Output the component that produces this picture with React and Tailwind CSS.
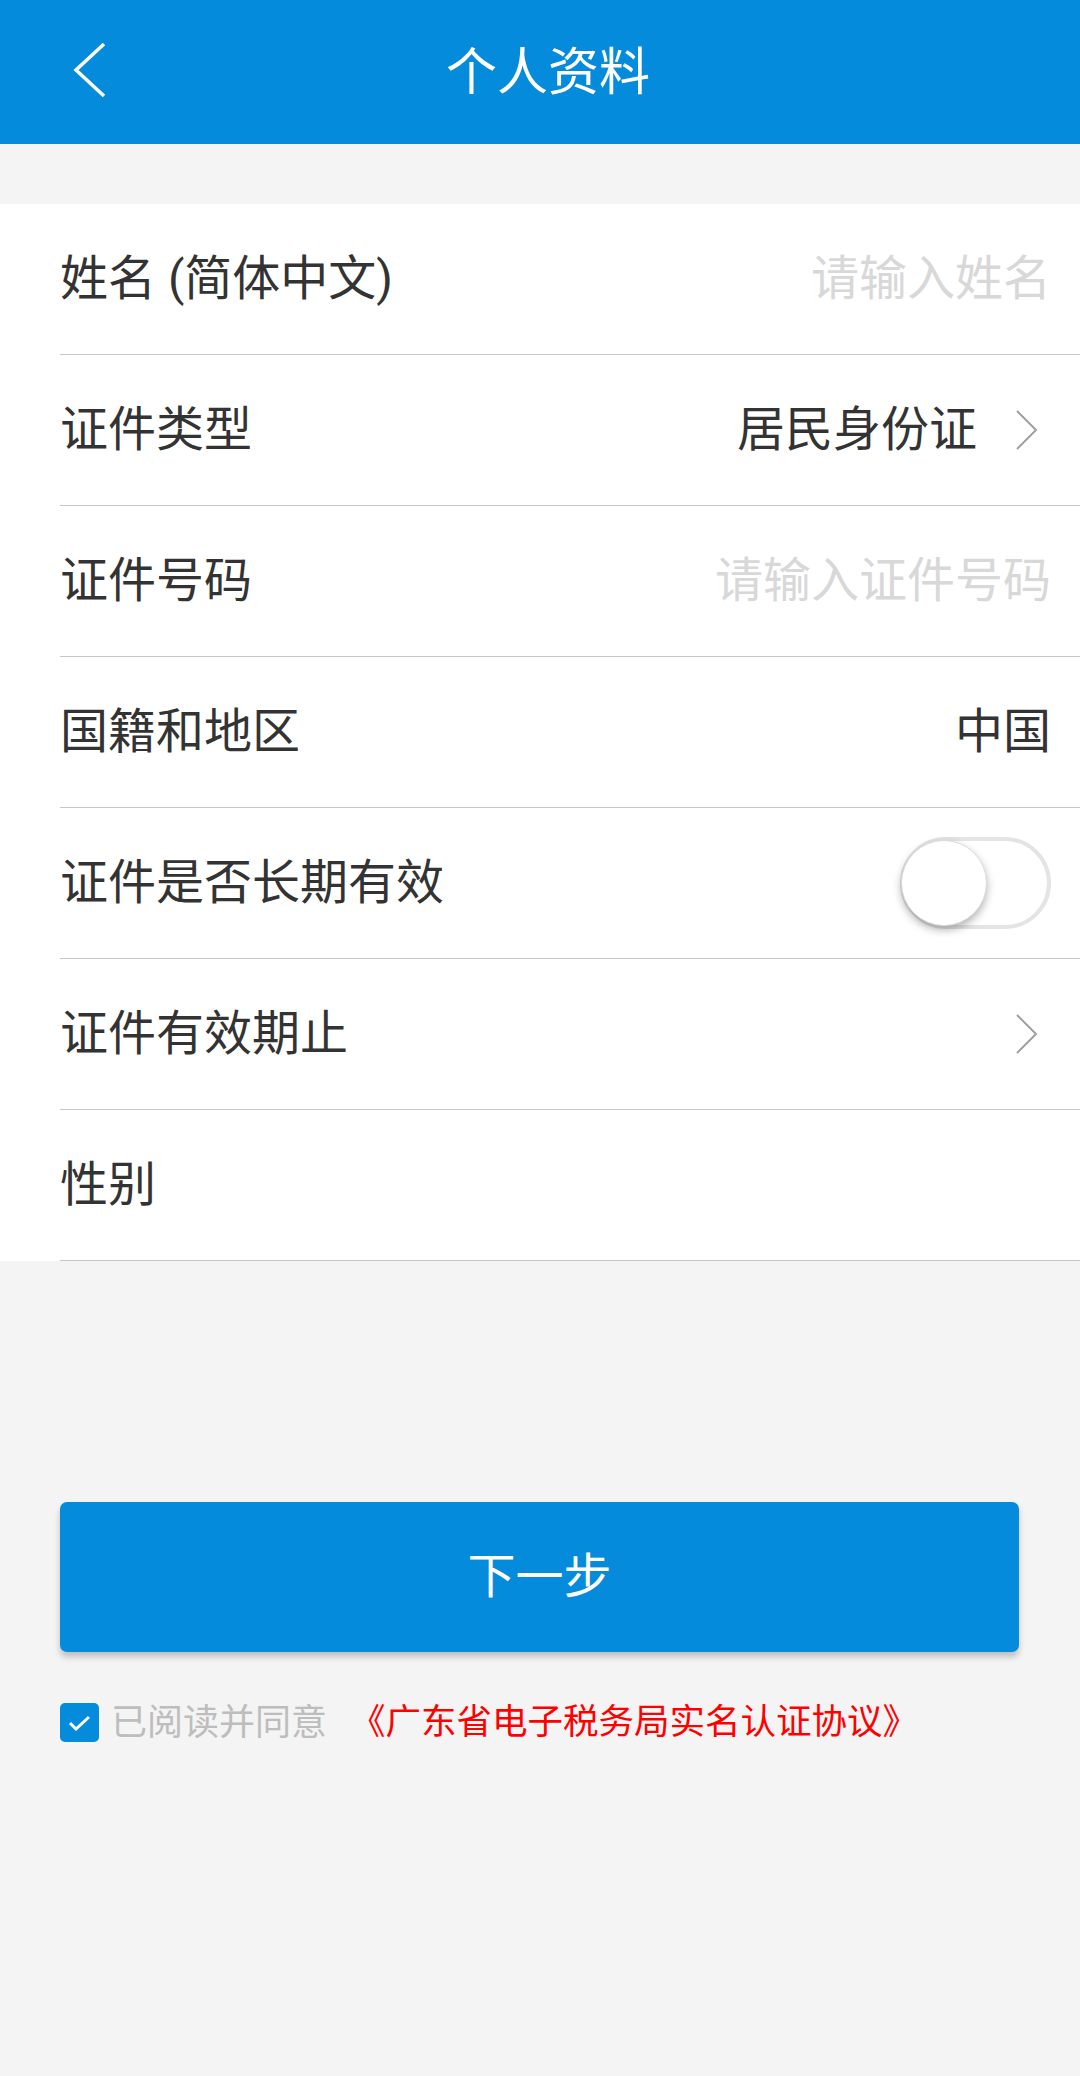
import React, { useState } from 'react';

const font = { fontFamily: 'Roboto, "Noto Sans CJK SC", sans-serif' };

const Chevron = () => (
  <svg width="24" height="42" viewBox="0 0 24 42" className="mr-[13px] shrink-0">
    <polyline points="3,2 22,21 3,40" fill="none" stroke="#a0a0a0" strokeWidth="2" />
  </svg>
);

const Row = ({ label, children }) => (
  <div className="pl-[60px]">
    <div className="h-[151px] flex items-center justify-between border-b border-[#c6c6c6] pr-[29px]">
      <span className="text-[48px] text-[#333333] leading-none">{label}</span>
      {children}
    </div>
  </div>
);

const Toggle = ({ on, onChange }) => (
  <button
    onClick={() => onChange(!on)}
    className="w-[151px] h-[92px] rounded-full border-[4px] border-[#e4e4e4] bg-white flex items-center"
  >
    <span className="w-[86px] h-[86px] rounded-full bg-white shadow-[0_4px_8px_rgba(0,0,0,0.3)] border border-[#dcdcdc] ml-[-3px]" />
  </button>
);

export default function App() {
  const [longTerm, setLongTerm] = useState(false);
  const [agree, setAgree] = useState(true);

  return (
    <div style={font} className="w-[1080px] min-h-[2076px] bg-[#f4f4f4] flex flex-col">
      {/* header */}
      <div className="h-[144px] bg-[#058bdb] flex items-center relative">
        <svg width="48" height="60" viewBox="0 0 48 60" className="ml-[66px]">
          <polyline points="38,2 10,28 38,54" fill="none" stroke="#ffffff" strokeWidth="3.5" />
        </svg>
        <div className="absolute left-[16px] right-0 top-0 h-[144px] flex items-center justify-center pointer-events-none">
          <span className="text-[51px] text-white leading-none">个人资料</span>
        </div>
      </div>

      {/* form */}
      <div className="mt-[60px] bg-white">
        <Row label="姓名 (简体中文)">
          <span className="text-[48px] text-[#d8d8d8] leading-none">请输入姓名</span>
        </Row>
        <Row label="证件类型">
          <div className="flex items-center">
            <span className="text-[48px] text-[#333333] leading-none mr-[37px]">居民身份证</span>
            <Chevron />
          </div>
        </Row>
        <Row label="证件号码">
          <span className="text-[48px] text-[#d8d8d8] leading-none">请输入证件号码</span>
        </Row>
        <Row label="国籍和地区">
          <span className="text-[48px] text-[#333333] leading-none">中国</span>
        </Row>
        <Row label="证件是否长期有效">
          <Toggle on={longTerm} onChange={setLongTerm} />
        </Row>
        <Row label="证件有效期止">
          <Chevron />
        </Row>
        <Row label="性别" />
      </div>

      {/* next button */}
      <div className="pl-[60px] pr-[61px] mt-[241px]">
        <button className="w-full h-[150px] rounded-[7px] bg-[#058bdb] text-white text-[48px] leading-none shadow-[0_5px_6px_rgba(0,0,0,0.22)]">
          下一步
        </button>
      </div>

      {/* agreement */}
      <div className="mt-[51px] pl-[60px] flex items-center">
        <button
          onClick={() => setAgree(!agree)}
          className={`w-[39px] h-[39px] rounded-[5px] flex items-center justify-center ${agree ? 'bg-[#058bdb]' : 'bg-white border border-[#bbbbbb]'}`}
        >
          {agree && (
            <svg width="39" height="39" viewBox="0 0 39 39">
              <polyline points="10,20 16,26 29,14" fill="none" stroke="#ffffff" strokeWidth="3" />
            </svg>
          )}
        </button>
        <span className="ml-[12px] text-[36px] text-[#bdbdbd] leading-none">已阅读并同意</span>
        <span className="ml-[23px] text-[35.5px] text-[#ff0000] leading-none">《广东省电子税务局实名认证协议》</span>
      </div>
    </div>
  );
}
